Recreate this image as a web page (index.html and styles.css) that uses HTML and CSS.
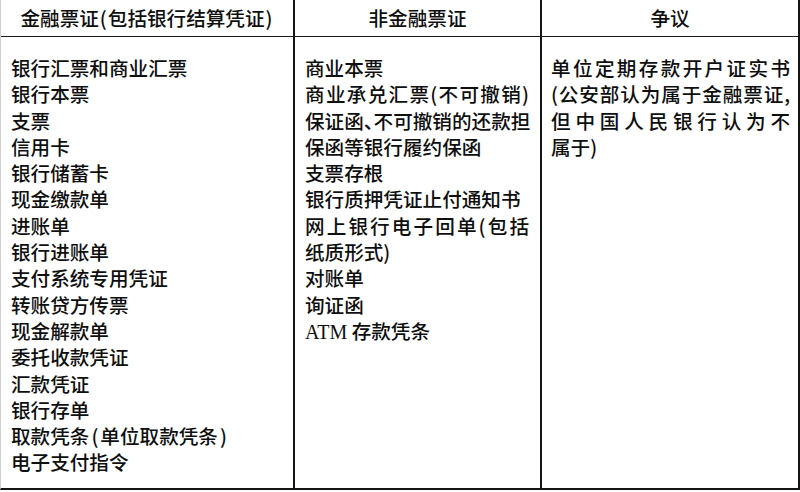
FILE: index.html
```html
<!DOCTYPE html>
<html lang="zh-CN">
<head>
<meta charset="utf-8">
<title>金融票证</title>
<link rel="stylesheet" href="styles.css">
</head>
<body>
<div class="table">
  <div class="cell head c1">金融票证<span class="p">(</span>包括银行结算凭证<span class="p">)</span></div>
  <div class="cell head c2">非金融票证</div>
  <div class="cell head c3">争议</div>

  <div class="cell body c1">
    <div class="ln">银行汇票和商业汇票</div>
    <div class="ln">银行本票</div>
    <div class="ln">支票</div>
    <div class="ln">信用卡</div>
    <div class="ln">银行储蓄卡</div>
    <div class="ln">现金缴款单</div>
    <div class="ln">进账单</div>
    <div class="ln">银行进账单</div>
    <div class="ln">支付系统专用凭证</div>
    <div class="ln">转账贷方传票</div>
    <div class="ln">现金解款单</div>
    <div class="ln">委托收款凭证</div>
    <div class="ln">汇款凭证</div>
    <div class="ln">银行存单</div>
    <div class="ln">取款凭条<span class="p">(</span>单位取款凭条<span class="p">)</span></div>
    <div class="ln">电子支付指令</div>
  </div>

  <div class="cell body c2">
    <div class="ln">商业本票</div>
    <div class="ln fill">商业承兑汇票(不可撤销)</div>
    <div class="ln fill">保证函<span class="half">、</span>不可撤销的还款担</div>
    <div class="ln">保函等银行履约保函</div>
    <div class="ln">支票存根</div>
    <div class="ln">银行质押凭证止付通知书</div>
    <div class="ln fill">网上银行电子回单(包括</div>
    <div class="ln">纸质形式)</div>
    <div class="ln">对账单</div>
    <div class="ln">询证函</div>
    <div class="ln"><span class="latin">ATM</span> 存款凭条</div>
  </div>

  <div class="cell body c3">
    <div class="ln fill">单位定期存款开户证实书</div>
    <div class="ln fill">(公安部认为属于金融票证,</div>
    <div class="ln fill">但中国人民银行认为不</div>
    <div class="ln">属于)</div>
  </div>
</div>
</body>
</html>
```

FILE: styles.css
```css
html, body {
  margin: 0;
  padding: 0;
  background: #ffffff;
}

body {
  font-family: "Noto Sans CJK SC", "Noto Sans", sans-serif;
  font-size: 19.6px;
  font-weight: 500;
  color: #0f0f0f;
}

.table {
  box-sizing: border-box;
  width: 800px;
  height: 490px;
  display: grid;
  grid-template-columns: 294px 247px 1fr;
  grid-template-rows: 37px 1fr;
  border-left: 1px solid #cfcfcf;
  border-right: 2px solid #151515;
  border-bottom: 2px solid #151515;
}

.cell {
  box-sizing: border-box;
}

.c1, .c2 {
  border-right: 2px solid #151515;
}

.head {
  display: flex;
  align-items: center;
  justify-content: center;
  border-bottom: 1.5px solid #1a1a1a;
  line-height: 1;
  padding-bottom: 1px;
}

.body {
  padding-top: 18px;
  line-height: 26.3px;
}

.body.c1 {
  padding-left: 10px;
}

.body.c2 {
  padding-left: 10px;
  padding-right: 11px;
}

.body.c3 {
  padding-left: 9px;
  padding-right: 8px;
}

.ln {
  white-space: nowrap;
}

.fill {
  text-align: justify;
  text-align-last: justify;
}

.p {
  margin: 0 2px;
}

.head .p {
  margin: 0 1px;
}

.half {
  font-feature-settings: "halt";
}

.latin {
  font-family: "Liberation Serif", serif;
  font-size: 20px;
  font-weight: 400;
}
```
